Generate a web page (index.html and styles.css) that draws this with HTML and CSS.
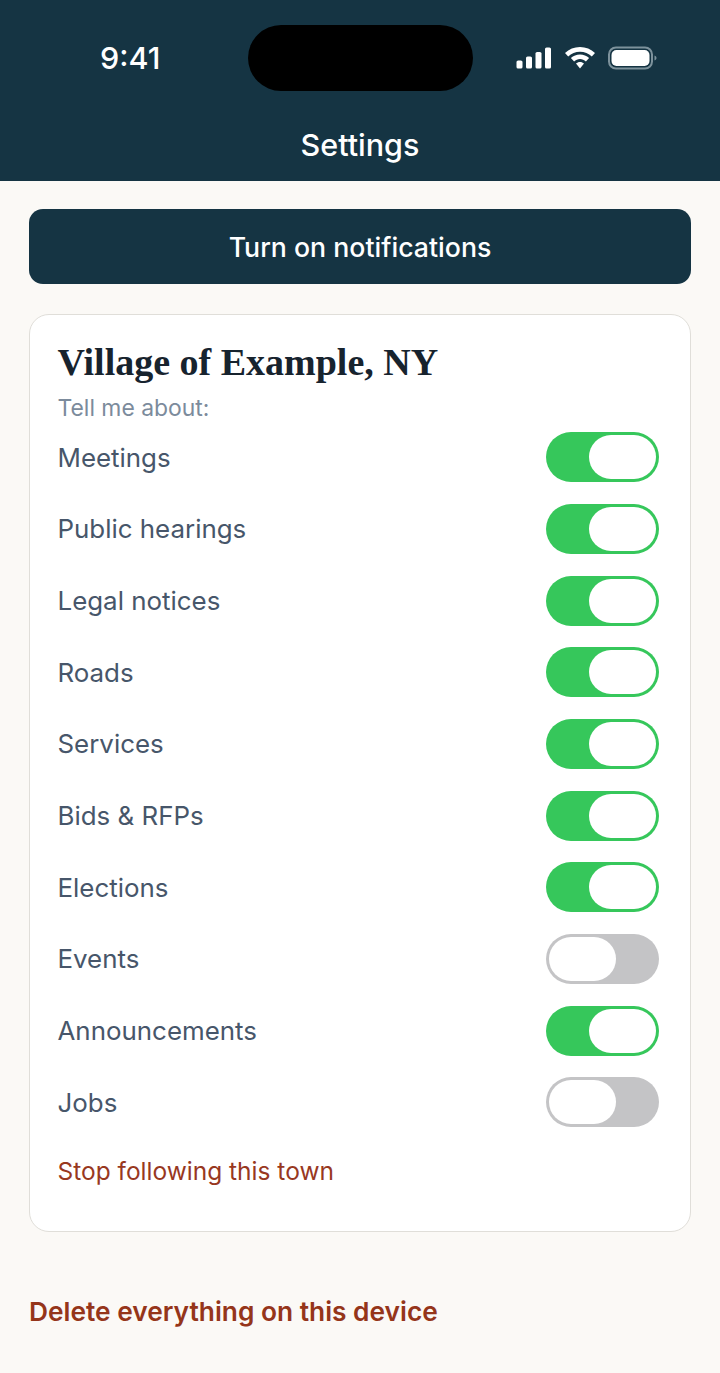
FILE: index.html
```html
<!DOCTYPE html>
<html lang="en">
<head>
<meta charset="utf-8">
<title>Settings</title>
<link rel="stylesheet" href="styles.css">
</head>
<body>
<header class="header">
  <div class="status">
    <span class="time">9:41</span>
    <div class="island"></div>
    <div class="status-icons">
      <svg class="signal" width="36" height="22" viewBox="0 0 36 22"><rect x="0.5" y="13.5" width="6" height="8" rx="1.6"/><rect x="10" y="9.5" width="6" height="12" rx="1.6"/><rect x="19.5" y="5" width="6" height="16.500" rx="1.6"/><rect x="29" y="0.500" width="6" height="21" rx="1.6"/></svg>
      <svg class="wifi" width="30" height="22" viewBox="0 0 30 22"><path d="M15 0C20.800 0 26 2.300 30 6.100L26.800 9.500C23.700 6.500 19.500 4.700 15 4.700C10.500 4.700 6.300 6.500 3.200 9.500L0 6.100C4 2.300 9.200 0 15 0Z M15 7.500C18.500 7.500 21.700 8.900 24.100 11.100L20.900 14.500C19.300 13 17.300 12.100 15 12.100C12.700 12.100 10.700 13 9.100 14.500L5.900 11.100C8.300 8.900 11.500 7.500 15 7.500Z M15 15C16.500 15 17.900 15.600 19 16.600L15 21.500L11 16.600C12.100 15.600 13.500 15 15 15Z"/></svg>
      <svg class="battery" width="49" height="24" viewBox="0 0 49 24"><rect x="1" y="1.500" width="43" height="21" rx="7" class="batt-shell"/><rect x="3.500" y="4" width="38" height="16" rx="5" class="batt-fill"/><path d="M46.500 9.500C47.800 10 48.500 11 48.500 12C48.500 13 47.800 14 46.500 14.500Z" class="batt-cap"/></svg>
    </div>
  </div>
  <h1 class="title">Settings</h1>
</header>
<main class="main">
  <button class="notify" type="button">Turn on notifications</button>
  <section class="card">
    <h2 class="town">Village of Example, NY</h2>
    <p class="tell">Tell me about:</p>
    <ul class="rows">
      <li class="row"><span>Meetings</span><span class="toggle on"><i class="knob"></i></span></li>
      <li class="row"><span>Public hearings</span><span class="toggle on"><i class="knob"></i></span></li>
      <li class="row"><span>Legal notices</span><span class="toggle on"><i class="knob"></i></span></li>
      <li class="row"><span>Roads</span><span class="toggle on"><i class="knob"></i></span></li>
      <li class="row"><span>Services</span><span class="toggle on"><i class="knob"></i></span></li>
      <li class="row"><span>Bids &amp; RFPs</span><span class="toggle on"><i class="knob"></i></span></li>
      <li class="row"><span>Elections</span><span class="toggle on"><i class="knob"></i></span></li>
      <li class="row"><span>Events</span><span class="toggle off"><i class="knob"></i></span></li>
      <li class="row"><span>Announcements</span><span class="toggle on"><i class="knob"></i></span></li>
      <li class="row"><span>Jobs</span><span class="toggle off"><i class="knob"></i></span></li>
    </ul>
    <a class="stop">Stop following this town</a>
  </section>
  <a class="delete">Delete everything on this device</a>
</main>
</body>
</html>
```
FILE: styles.css
```css
* { box-sizing: border-box; }
html, body { margin: 0; padding: 0; }
body {
  width: 720px;
  height: 1373px;
  overflow: hidden;
  background: #fbf9f6;
  font-family: Inter, "Liberation Sans", sans-serif;
}
.header {
  height: 180.500px;
  background: #153443;
  color: #fff;
  padding-top: 25px;
}
.status {
  height: 66px;
  display: flex;
  align-items: center;
  padding-left: 100px;
}
.time {
  width: 147.500px;
  font-size: 30.500px;
  font-weight: 500;
  line-height: 66px;
}
.island {
  width: 225px;
  height: 66px;
  border-radius: 33px;
  background: #000;
}
.status-icons {
  margin-left: 43.500px;
  display: flex;
  align-items: center;
  gap: 13px;
}
.signal, .wifi { fill: #fff; }
.batt-shell { fill: none; stroke: #7d929c; stroke-width: 2; }
.batt-fill { fill: #fff; }
.batt-cap { fill: #7d929c; }
.title {
  margin: 36px 0 0;
  text-align: center;
  font-size: 30.500px;
  line-height: 36px;
  font-weight: 500;
}
.main { padding: 28.500px 29px 0; }
.notify {
  display: block;
  width: 662px;
  height: 75px;
  border: 0;
  border-radius: 14px;
  background: #153443;
  color: #fff;
  font-family: inherit;
  font-size: 26.700px;
  font-weight: 500;
}
.card {
  width: 662px;
  height: 918px;
  margin-top: 30px;
  padding: 25.500px 31.500px 0 27.500px;
  background: #fff;
  border: 1.500px solid #e0ded9;
  border-radius: 20px;
}
.town {
  margin: 0;
  font-family: "Liberation Serif", serif;
  font-size: 38px;
  line-height: 42px;
  font-weight: 700;
  color: #17232e;
}
.tell {
  margin: 11px 0 0;
  font-size: 22.900px;
  line-height: 28px;
  color: #7c8b9c;
}
.rows {
  list-style: none;
  margin: 0;
  padding: 0;
}
.row {
  height: 71.670px;
  display: flex;
  align-items: center;
  justify-content: space-between;
  font-size: 25.900px;
  color: #47566a;
}
.toggle {
  width: 113px;
  height: 50px;
  border-radius: 25px;
  padding: 3px;
  display: flex;
}
.toggle.on { background: #36c75b; justify-content: flex-end; }
.toggle.off { background: #c4c4c6; justify-content: flex-start; }
.knob {
  display: block;
  width: 67px;
  height: 44px;
  border-radius: 22px;
  background: #fff;
}
.stop {
  display: block;
  margin-top: 16.500px;
  font-size: 24.500px;
  line-height: 32px;
  color: #98381f;
}
.delete {
  display: block;
  margin-top: 64px;
  font-size: 26.300px;
  line-height: 32px;
  font-weight: 600;
  color: #95351a;
}
```
